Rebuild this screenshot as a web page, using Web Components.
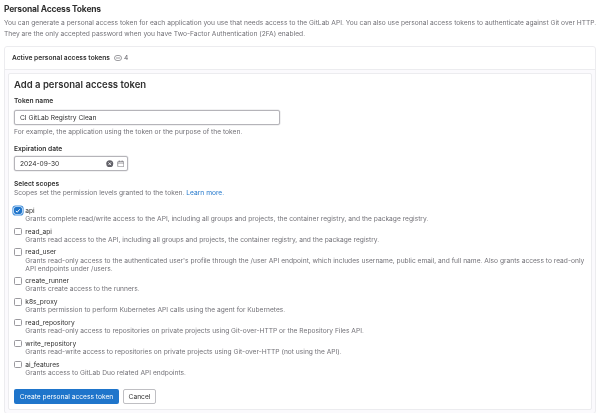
<!DOCTYPE html>
<html>
<head>
<meta charset="utf-8">
<title>Personal Access Tokens</title>
<style>
  html, body { margin: 0; padding: 0; background: #fff; }
  body { font-family: Inter, 'Liberation Sans', sans-serif; color: #303030; overflow: hidden; }
</style>
</head>
<body>
<token-page></token-page>

<script>
const tokenPageTemplate = document.createElement('template');
tokenPageTemplate.innerHTML = `
<style>
  :host{ display: block; width: 600px; height: 413px; box-sizing: border-box; padding: 3px 4px 0; overflow: hidden; filter: blur(.35px); }
  h1{ margin: 0; font-size: 8.5px; line-height: 13px; font-weight: 700; letter-spacing: -.2px; color: #303030; }
  p{ margin: 1.5px 0 0; font-size: 6.67px; line-height: 11px; color: #737278; white-space: nowrap; }
  .card{ margin-top: 6.5px; border: 1px solid #ececef; border-radius: 3px; background: #fbfafd; }
  .head{ height: 22px; display: flex; align-items: center; gap: 4px; padding: 0 7px; background: #fff; border-bottom: 1px solid #ececef; font-size: 6.67px; font-weight: 600; border-radius: 3px 3px 0 0; }
  .count{ display: flex; align-items: center; gap: 2px; font-weight: 400; color: #626168; }
  .body{ padding: 3px 3px 3px; }
</style>
<h1>Personal Access Tokens</h1>
<p>You can generate a personal access token for each application you use that needs access to the GitLab API. You can also use personal access tokens to authenticate against Git over HTTP.<br>They are the only accepted password when you have Two-Factor Authentication (2FA) enabled.</p>
<div class="card">
  <div class="head">Active personal access tokens
    <span class="count">
      <svg width="8" height="6" viewBox="0 0 16 12" fill="none" stroke="#737278" stroke-width="1.4"><rect x="1" y="1" width="14" height="10" rx="5"/><path d="M4 6h8"/></svg>4
    </span>
  </div>
  <div class="body"><token-form></token-form></div>
</div>
`;

class TokenPage extends HTMLElement{
  constructor(){
    super();
    this.attachShadow({mode: 'open'});
    this.shadowRoot.appendChild(tokenPageTemplate.content.cloneNode(true));
  }
}

const tokenFormTemplate = document.createElement('template');
tokenFormTemplate.innerHTML = `
<style>
  :host{ display: block; box-sizing: border-box; background: #fff; border: 1px solid #ececef; border-radius: 2px; padding: 4px 5px 5px; }
  h2{ margin: 0; font-size: 9.52px; line-height: 14px; font-weight: 600; color: #303030; }
  label, .label{ display: block; font-size: 6.67px; line-height: 10px; font-weight: 600; color: #303030; }
  .hint{ font-size: 6.67px; line-height: 9.5px; color: #737278; }
  .field{ box-sizing: border-box; height: 15px; border: 1px solid #b5b4b9; border-radius: 2px; display: flex; align-items: center; padding: 0 5px; font-size: 6.67px; color: #303030; background: #fff; box-shadow: 0 0 0 .5px #e4e4e6; }
  .name{ width: 266px; margin-top: 4px; }
  .date{ width: 114px; margin-top: 2.5px; justify-content: space-between; padding-right: 3px; }
  .icons{ display: flex; align-items: center; gap: 3px; }
  svg{ display: block; }
  a{ color: #1f75cb; text-decoration: none; }
  .scopes{ display: flex; flex-direction: column; margin-top: 7.2px; }
  .actions{ display: flex; gap: 4px; margin-top: 8.6px; }
  button{ font: inherit; font-size: 6.67px; height: 15px; border-radius: 2px; padding: 0; border: 0; }
  .primary{ width: 105px; background: #1f75cb; color: #fff; }
  .cancel{ width: 33px; background: #fff; color: #303030; border: 1px solid #bfbfc3; }
</style>
<h2>Add a personal access token</h2>
<label style="margin-top:4px">Token name</label>
<div class="field name">CI GitLab Registry Clean</div>
<div class="hint" style="margin-top:3px">For example, the application using the token or the purpose of the token.</div>
<label style="margin-top:6px">Expiration date</label>
<div class="field date">2024-09-30
  <span class="icons">
    <svg width="7.5" height="7.5" viewBox="0 0 16 16"><circle cx="8" cy="8" r="7.5" fill="#626168"/><path d="M5.2 5.2l5.6 5.6M10.8 5.2l-5.6 5.6" stroke="#fff" stroke-width="1.8"/></svg>
    <svg width="7.5" height="7.5" viewBox="0 0 16 16" fill="none" stroke="#626168" stroke-width="1.3"><rect x="1.5" y="3" width="13" height="11.5" rx="1.5"/><path d="M1.5 6.5h13M5 1v3M11 1v3"/></svg>
  </span>
</div>
<div class="label" style="margin-top:8px">Select scopes</div>
<div class="hint">Scopes set the permission levels granted to the token. <a>Learn more.</a></div>
<div class="scopes">
  <scope-row name="api" checked>Grants complete read/write access to the API, including all groups and projects, the container registry, and the package registry.</scope-row>
  <scope-row name="read_api">Grants read access to the API, including all groups and projects, the container registry, and the package registry.</scope-row>
  <scope-row name="read_user">Grants read-only access to the authenticated user's profile through the /user API endpoint, which includes username, public email, and full name. Also grants access to read-only API endpoints under /users.</scope-row>
  <scope-row name="create_runner">Grants create access to the runners.</scope-row>
  <scope-row name="k8s_proxy">Grants permission to perform Kubernetes API calls using the agent for Kubernetes.</scope-row>
  <scope-row name="read_repository">Grants read-only access to repositories on private projects using Git-over-HTTP or the Repository Files API.</scope-row>
  <scope-row name="write_repository">Grants read-write access to repositories on private projects using Git-over-HTTP (not using the API).</scope-row>
  <scope-row name="ai_features">Grants access to GitLab Duo related API endpoints.</scope-row>
</div>
<div class="actions">
  <button class="primary">Create personal access token</button>
  <button class="cancel">Cancel</button>
</div>
`;

class TokenForm extends HTMLElement{
  constructor(){
    super();
    this.attachShadow({mode: 'open'});
    this.shadowRoot.appendChild(tokenFormTemplate.content.cloneNode(true));
  }
}

const scopeRowTemplate = document.createElement('template');
scopeRowTemplate.innerHTML = `
<style>
  :host{ display: grid; grid-template-columns: 7.5px 1fr; column-gap: 3.8px; padding-bottom: 2.8px; }
  .box{ box-sizing: border-box; width: 7.5px; height: 7.5px; margin-top: 1px; border: 1px solid #9a999e; border-radius: 1.5px; background: #fff; }
  :host([checked]) .box{ background: #1f75cb; border-color: #1f75cb; box-shadow: 0 0 0 .6px #fff, 0 0 0 1.6px #428fdc; }
  .box svg{ display: none; width: 5.5px; height: 5.5px; }
  :host([checked]) .box svg{ display: block; }
  .name{ font-size: 6.67px; line-height: 10.3px; color: #303030; }
  .desc{ grid-column: 2; font-size: 6.67px; line-height: 7.8px; color: #737278; }
</style>
<div class="box"><svg viewBox="0 0 8 8" fill="none" stroke="#fff" stroke-width="1.4"><path d="M1.2 4.2l2 2 3.6-4.4"/></svg></div>
<div class="name"></div>
<div class="desc"><slot></slot></div>
`;

class ScopeRow extends HTMLElement{
  constructor(){
    super();
    this.attachShadow({mode: 'open'});
    this.shadowRoot.appendChild(scopeRowTemplate.content.cloneNode(true));
    this.shadowRoot.querySelector('.name').textContent = this.getAttribute('name');
  }
}

window.customElements.define('scope-row', ScopeRow);
window.customElements.define('token-form', TokenForm);
window.customElements.define('token-page', TokenPage);
</script>
</body>
</html>
